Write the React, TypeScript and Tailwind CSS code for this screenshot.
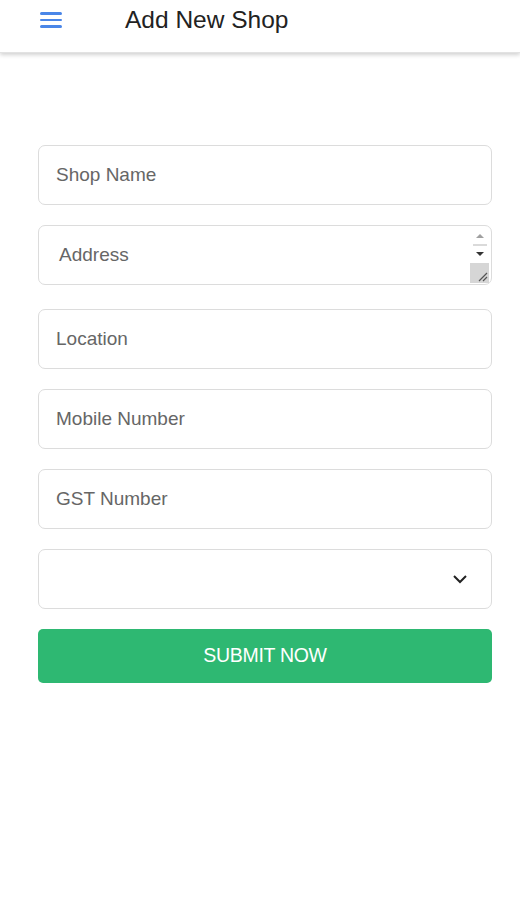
import React from "react";

const field =
  "w-full h-[60px] rounded-[7px] border border-[#dcdcdc] bg-white px-[17px] text-[19px] text-[#555] flex items-center";

export default function App() {
  return (
    <div className="min-h-[900px] bg-white font-['Liberation_Sans',Arial,sans-serif]">
      <header className="h-[53px] flex items-center bg-white shadow-[0_2px_4px_rgba(0,0,0,0.18)] border-b border-[#e2e2e2]">
        <div className="ml-[40px] w-[22px] flex flex-col gap-[4px] mt-[-12px]">
          <span className="block h-[2.5px] bg-[#4a86e8] rounded" />
          <span className="block h-[2.5px] bg-[#4a86e8] rounded" />
          <span className="block h-[2.5px] bg-[#4a86e8] rounded" />
        </div>
        <h1 className="ml-[63px] mt-[-12px] text-[24.5px] text-[#222]">Add New Shop</h1>
      </header>

      <form className="pl-[38px] pr-[28px] pt-[92px] flex flex-col w-full">
        <div className={field}>
          <span className="text-[#666]">Shop Name</span>
        </div>

        <div className="mt-[20px] relative w-full h-[60px] rounded-[7px] border border-[#dcdcdc] bg-white">
          <span className="absolute left-[20px] top-[15px] text-[19px] text-[#666]">Address</span>
          <div className="absolute right-[2px] top-[2px] bottom-[1px] w-[19px] flex flex-col items-center">
            <div className="h-[16px] w-full flex items-center justify-center">
              <div className="w-0 h-0 border-l-[4px] border-r-[4px] border-b-[4px] border-l-transparent border-r-transparent border-b-[#a0a0a0]" />
            </div>
            <div className="h-[2px] w-[14px] bg-[#dadada]" />
            <div className="h-[15px] w-full flex items-center justify-center">
              <div className="w-0 h-0 border-l-[4px] border-r-[4px] border-t-[4px] border-l-transparent border-r-transparent border-t-[#333]" />
            </div>
            <div className="mt-auto h-[20px] w-full bg-[#d6d6d6] relative">
              <svg className="absolute right-[1px] bottom-[1px]" width="12" height="12" viewBox="0 0 12 12">
                <path d="M11 3 L3 11 M11 7 L7 11" stroke="#555" strokeWidth="1.2" />
              </svg>
            </div>
          </div>
        </div>

        <div className={"mt-[24px] " + field}>
          <span className="text-[#666]">Location</span>
        </div>
        <div className={"mt-[20px] " + field}>
          <span className="text-[#666]">Mobile Number</span>
        </div>
        <div className={"mt-[20px] " + field}>
          <span className="text-[#666]">GST Number</span>
        </div>
        <div className={"mt-[20px] justify-end " + field}>
          <svg width="16" height="10" viewBox="0 0 16 10" className="mr-[6px]">
            <path d="M2 2 L8 8 L14 2" fill="none" stroke="#222" strokeWidth="2" />
          </svg>
        </div>

        <button
          type="button"
          className="mt-[20px] h-[54px] w-full rounded-[5px] bg-[#2eb872] text-white text-[19.5px] tracking-[-0.3px] flex items-center justify-center"
        >
          SUBMIT NOW
        </button>
      </form>
    </div>
  );
}
